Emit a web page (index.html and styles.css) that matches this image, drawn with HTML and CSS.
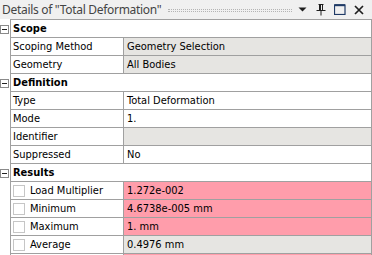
FILE: index.html
```html
<!DOCTYPE html>
<html>
<head>
<meta charset="utf-8">
<link rel="stylesheet" href="styles.css">
</head>
<body>
<div class="panel">
  <div class="titlebar">
    <span class="title">Details of "Total Deformation"</span>
    <span class="grip"></span>
    <span class="tools">
      <svg class="ico" width="10" height="6" viewBox="0 0 10 6"><polygon points="0.5,0.5 8.5,0.5 4.5,4.5" fill="#1e1e1e"/></svg>
      <svg class="ico pin" width="10" height="12" viewBox="0 0 10 12"><path d="M2.5 0.5h5M3.5 0.5v6M6.5 0.5v6M4.5 0.5v6M0.5 6.5h9M5 6.5v5" stroke="#1e1e1e" stroke-width="1" fill="none"/></svg>
      <svg class="ico" width="12" height="11" viewBox="0 0 12 11"><rect x="0.5" y="1" width="10.5" height="9.5" fill="none" stroke="#1f3a66" stroke-width="1.2"/><line x1="0.5" y1="1.2" x2="11" y2="1.2" stroke="#1f3a66" stroke-width="2"/></svg>
      <svg class="ico" width="10" height="10" viewBox="0 0 10 10"><path d="M1 1L9 9M9 1L1 9" stroke="#1e1e1e" stroke-width="1.7"/></svg>
    </span>
  </div>
  <div class="grid">
    <div class="gut"><span class="tog"></span></div>
    <div class="grp top">Scope</div>

    <div class="gut"></div><div class="lab">Scoping Method</div><div class="val gray">Geometry Selection</div>
    <div class="gut"></div><div class="lab">Geometry</div><div class="val gray">All Bodies</div>

    <div class="gut"><span class="tog"></span></div>
    <div class="grp">Definition</div>

    <div class="gut"></div><div class="lab">Type</div><div class="val">Total Deformation</div>
    <div class="gut"></div><div class="lab">Mode</div><div class="val">1.</div>
    <div class="gut"></div><div class="lab">Identifier</div><div class="val gray"></div>
    <div class="gut"></div><div class="lab">Suppressed</div><div class="val">No</div>

    <div class="gut"><span class="tog"></span></div>
    <div class="grp">Results</div>

    <div class="gut"></div><div class="lab"><span class="chk"></span>Load Multiplier</div><div class="val pink">1.272e-002</div>
    <div class="gut"></div><div class="lab"><span class="chk"></span>Minimum</div><div class="val pink">4.6738e-005 mm</div>
    <div class="gut"></div><div class="lab"><span class="chk"></span>Maximum</div><div class="val pink">1. mm</div>
    <div class="gut"></div><div class="lab"><span class="chk"></span>Average</div><div class="val gray">0.4976 mm</div>
    <div class="gut"></div><div class="lab"></div><div class="val pink"></div>
  </div>
</div>
</body>
</html>
```
FILE: styles.css
```css
html, body {
  margin: 0;
  padding: 0;
  background: #ffffff;
}
body {
  width: 372px;
  height: 255px;
  overflow: hidden;
}
.panel {
  width: 372px;
  height: 255px;
  overflow: hidden;
}
.titlebar {
  height: 19px;
  background: #f0f0f0;
  display: flex;
  align-items: center;
  padding-left: 2px;
  box-sizing: border-box;
}
.title {
  font-family: "Noto Sans", "Open Sans", sans-serif;
  font-size: 12px;
  letter-spacing: -0.3px;
  color: #444444;
  white-space: nowrap;
  line-height: 19px;
}
.grip {
  flex: 1;
  height: 3px;
  margin: 1px 6px 0 7px;
  border-top: 1px dotted #b4b4b4;
  border-bottom: 1px dotted #b4b4b4;
  box-sizing: border-box;
}
.tools {
  display: flex;
  align-items: center;
  gap: 8px;
  padding-right: 8px;
}
.ico {
  display: block;
}
.grid {
  display: grid;
  grid-template-columns: 10px 113px 249px;
  grid-template-rows: 19px;
  grid-auto-rows: 18px;
  font-family: "DejaVu Sans Condensed", "DejaVu Sans", sans-serif;
  font-size: 11px;
  color: #000000;
}
.grid > div {
  box-sizing: border-box;
}
.gut {
  display: flex;
  align-items: center;
}
.tog {
  display: block;
  width: 9px;
  height: 9px;
  box-sizing: border-box;
  border: 1px solid #8a8a8a;
  background: linear-gradient(#222, #222) center / 5px 1px no-repeat, #fff;
  margin-top: 1px;
}
.grp {
  grid-column: 2 / 4;
  border-left: 1px solid #a0a0a0;
  border-right: 1px solid #a0a0a0;
  border-bottom: 1px solid #a0a0a0;
  font-weight: bold;
  padding-left: 2px;
  display: flex;
  align-items: center;
  background: #fff;
}
.grp.top {
  border-top: 1px solid #a0a0a0;
}
.lab {
  border-left: 1px solid #a0a0a0;
  border-bottom: 1px solid #a0a0a0;
  padding-left: 2px;
  display: flex;
  align-items: center;
  white-space: nowrap;
  overflow: hidden;
}
.val {
  border-left: 1px solid #a0a0a0;
  border-right: 1px solid #a0a0a0;
  border-bottom: 1px solid #a0a0a0;
  padding-left: 3px;
  display: flex;
  align-items: center;
  white-space: nowrap;
  overflow: hidden;
}
.gray {
  background: #e6e5e2;
}
.pink {
  background: #ff9dab;
}
.chk {
  display: block;
  width: 12px;
  height: 12px;
  box-sizing: border-box;
  border: 1px solid #c6c6c6;
  background: #fff;
  margin-right: 5px;
  flex: none;
}
```
